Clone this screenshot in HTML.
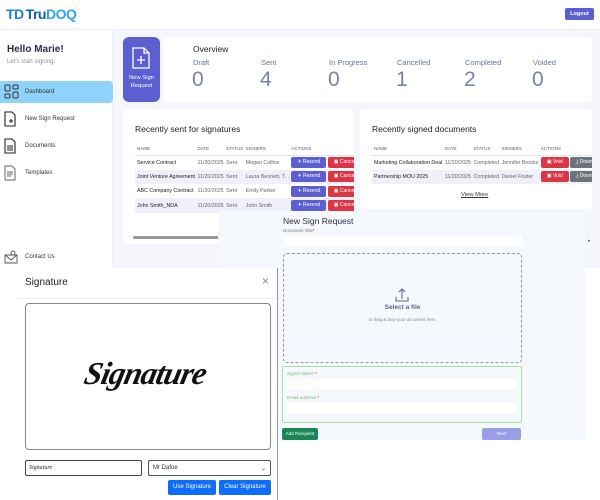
<!DOCTYPE html>
<html><head><style>
*{box-sizing:border-box;margin:0;padding:0}
body{width:600px;height:500px;position:relative;overflow:hidden;background:#fff;font-family:"Liberation Sans",sans-serif;color:#222}
.a{position:absolute}
.bg{left:113px;top:30px;width:487px;height:238px;background:#f4f6fc}
.hdr{left:0;top:0;width:600px;height:30px;border-bottom:1px solid #eceef5;background:#fff}
.sb{left:0;top:30px;width:113px;height:238px;border-right:1px solid #eceef5;background:#fff}
.card{background:#fff;border-radius:4px}
.lbl{font-size:7.5px;color:#6b7398}
.num{font-size:21px;color:#7a82a6;font-weight:300}
table{border-collapse:collapse;font-size:5.3px}
th{font-weight:normal;color:#555a7a;text-align:left;padding:4px 2.5px 4px 0;border-bottom:1px solid #e3e5ee;font-size:4.5px}
td{padding:0 2.5px 0 0;height:14.3px;color:#666;white-space:nowrap}
td:first-child,th:first-child{padding-left:2px}
td:first-child{color:#222}
tr.alt td{background:#f0f0fa}
.b{display:inline-block;color:#fff;border-radius:2px;height:11px;line-height:11px;font-size:5px;padding:0 6px}
.nav{position:absolute;left:25px;font-size:6px;color:#333}
</style></head><body>
<div class="a bg"></div>
<div class="a hdr"></div>
<div class="a" style="left:6px;top:6px;font-size:14px;font-weight:bold;color:#1e7ee8;letter-spacing:-0.5px">TD<span style="color:#0d5fb5;margin-left:2px">Tru</span><span style="color:#2aa5e8">DOQ</span></div>
<div class="a" style="left:565px;top:8px;width:29px;height:12px;background:#5b5fd0;border-radius:2px;color:#fff;font-size:5.5px;font-weight:bold;text-align:center;line-height:12px">Logout</div>
<div class="a sb"></div>
<div class="a" style="left:7px;top:44px;font-size:10px;font-weight:bold;color:#2c3148">Hello Marie!</div>
<div class="a" style="left:7px;top:59px;font-size:6px;color:#8a8fa8">Let's start signing.</div>
<div class="a" style="left:0;top:81px;width:113px;height:22px;background:#8fd3fb;border-radius:0 4px 4px 0"></div>
<svg class="a" style="left:4px;top:84px" width="15" height="15" viewBox="0 0 15 15" fill="none" stroke="#333" stroke-width="1"><rect x="1" y="1" width="5" height="6" rx="1"/><rect x="9" y="1" width="5" height="4" rx="1"/><rect x="1" y="10" width="5" height="4" rx="1"/><rect x="9" y="8" width="5" height="6" rx="1"/></svg>
<div class="nav" style="top:89px">Dashboard</div>
<svg class="a" style="left:4px;top:111px" width="12" height="16" viewBox="0 0 12 16" fill="none" stroke="#222" stroke-width="1.1"><path d="M1 1h7l3 3v11H1z M5 10h4 M7 8v4"/></svg>
<div class="nav" style="top:116px">New Sign Request</div>
<svg class="a" style="left:4px;top:138px" width="12" height="16" viewBox="0 0 12 16" fill="none" stroke="#222" stroke-width="1.1"><path d="M1 1h7l3 3v11H1z M3 8h6 M3 10h6 M3 12h6"/></svg>
<div class="nav" style="top:143px">Documents</div>
<svg class="a" style="left:4px;top:165px" width="12" height="16" viewBox="0 0 12 16" fill="none" stroke="#666" stroke-width="1"><path d="M1 1h7l3 3v11H1z M3 7h6 M3 9h6 M3 11h4"/></svg>
<div class="nav" style="top:170px">Templates</div>
<svg class="a" style="left:4px;top:250px" width="14" height="14" viewBox="0 0 14 14" fill="none" stroke="#555" stroke-width="0.9"><path d="M1 5h12v8H1z M1 5l6 5 6-5"/><circle cx="9" cy="3" r="2"/></svg>
<div class="nav" style="top:254px">Contact Us</div>

<div class="a" style="left:123px;top:37px;width:37px;height:65px;background:#5b5fd0;border-radius:6px"></div>
<svg class="a" style="left:132px;top:47px" width="18" height="22" viewBox="0 0 18 22" fill="none" stroke="#fff" stroke-width="1.3"><path d="M1 1h11l5 5v15H1z M12 1v5h5 M5 13h8 M9 9v8"/></svg>
<div class="a" style="left:123px;top:75px;width:37px;text-align:center;color:#fff;font-size:5.8px;line-height:7.5px">New Sign Request</div>
<div class="a card" style="left:163px;top:37px;width:429px;height:65px"></div>
<div class="a" style="left:193px;top:44px;font-size:8.5px;color:#222">Overview</div>
<div class="a lbl" style="left:193px;top:58px">Draft</div><div class="a num" style="left:192px;top:68px">0</div>
<div class="a lbl" style="left:261px;top:58px">Sent</div><div class="a num" style="left:260px;top:68px">4</div>
<div class="a lbl" style="left:329px;top:58px">In Progress</div><div class="a num" style="left:328px;top:68px">0</div>
<div class="a lbl" style="left:397px;top:58px">Cancelled</div><div class="a num" style="left:396px;top:68px">1</div>
<div class="a lbl" style="left:465px;top:58px">Completed</div><div class="a num" style="left:464px;top:68px">2</div>
<div class="a lbl" style="left:533px;top:58px">Voided</div><div class="a num" style="left:532px;top:68px">0</div>

<div class="a card" style="left:123px;top:109px;width:231px;height:135px;overflow:hidden">
<div style="position:absolute;left:12px;top:15px;font-size:8.5px">Recently sent for signatures</div>
<table style="position:absolute;left:12px;top:33px">
<tr><th>NAME</th><th>DATE</th><th>STATUS</th><th>SIGNERS</th><th>ACTIONS</th></tr>
<tr><td>Service Contract</td><td>11/20/2025</td><td>Sent</td><td>Megan Collins</td><td><span class="b" style="background:#5b5fd0">✈ Resend</span> <span class="b" style="background:#dc3545">▣ Cancel</span></td></tr>
<tr class="alt"><td>Joint Venture Agreement</td><td>11/20/2025</td><td>Sent</td><td>Laura Bennett, T...</td><td><span class="b" style="background:#5b5fd0">✈ Resend</span> <span class="b" style="background:#dc3545">▣ Cancel</span></td></tr>
<tr><td>ABC Company Contract</td><td>11/20/2025</td><td>Sent</td><td>Emily Parker</td><td><span class="b" style="background:#5b5fd0">✈ Resend</span> <span class="b" style="background:#dc3545">▣ Cancel</span></td></tr>
<tr class="alt"><td>John Smith_NDA</td><td>11/20/2025</td><td>Sent</td><td>John Smith</td><td><span class="b" style="background:#5b5fd0">✈ Resend</span> <span class="b" style="background:#dc3545">▣ Cancel</span></td></tr>
</table>
<div style="position:absolute;left:10px;top:127px;width:100px;height:3px;background:#999;border-radius:2px"></div>
</div>
<div class="a card" style="left:360px;top:109px;width:232px;height:100px;overflow:hidden">
<div style="position:absolute;left:12px;top:15px;font-size:8.5px">Recently signed documents</div>
<table style="position:absolute;left:12px;top:33px">
<tr><th>NAME</th><th>DATE</th><th>STATUS</th><th>SIGNERS</th><th>ACTIONS</th></tr>
<tr><td>Marketing Collaboration Deal</td><td>11/20/2025</td><td>Completed</td><td>Jennifer Brooks</td><td><span class="b" style="background:#dc3545">▣ Void</span> <span class="b" style="background:#6c757d">⤓ Download</span></td></tr>
<tr class="alt"><td>Partnership MOU 2025</td><td>11/20/2025</td><td>Completed</td><td>Daniel Foster</td><td><span class="b" style="background:#dc3545">▣ Void</span> <span class="b" style="background:#6c757d">⤓ Download</span></td></tr>
</table>
<div style="position:absolute;left:101px;top:83px;font-size:5.8px;text-decoration:underline;color:#333">View More</div>
</div>

<div class="a" style="left:218px;top:211px;width:367px;height:229px;background:#f5f8fd"></div>
<div class="a" style="left:283px;top:216px;font-size:8.5px;color:#2c3148">New Sign Request</div>
<div class="a" style="left:283px;top:228px;font-size:4.5px;color:#777">Document Title<span style="color:red">*</span></div>
<div class="a" style="left:283px;top:236px;width:239px;height:10px;background:#fff"></div>
<div class="a" style="left:283px;top:253px;width:239px;height:110px;border:1px dashed #999;border-radius:4px"></div>
<svg class="a" style="left:394px;top:287px" width="16" height="16" viewBox="0 0 16 16" fill="none" stroke="#5a6790" stroke-width="1.1"><path d="M8 12V2 M5 5l3-3 3 3 M2 10v4h12v-4"/></svg>
<div class="a" style="left:283px;top:304px;width:239px;text-align:center;font-size:6.5px;font-weight:bold;color:#5a6790">Select a file</div>
<div class="a" style="left:283px;top:317px;width:239px;text-align:center;font-size:4.3px;color:#888">or drag &amp; drop your document here.</div>
<div class="a" style="left:282px;top:366px;width:240px;height:57px;border:1px solid #a8e29a;border-radius:2px"></div>
<div class="a" style="left:287px;top:371px;font-size:4.6px;color:#7cb96e">Signer Name <span style="color:red">*</span></div>
<div class="a" style="left:287px;top:379px;width:230px;height:10px;background:#fff"></div>
<div class="a" style="left:287px;top:395px;font-size:4.6px;color:#7cb96e">Email address <span style="color:red">*</span></div>
<div class="a" style="left:287px;top:403px;width:230px;height:10px;background:#fff"></div>
<div class="a" style="left:282px;top:428px;width:36px;height:12px;background:#198754;border-radius:2px;color:#fff;font-size:4.6px;text-align:center;line-height:12px">Add Recipient</div>
<div class="a" style="left:482px;top:428px;width:39px;height:12px;background:#9a9ee6;border-radius:2px;color:#fff;font-size:4.6px;text-align:center;line-height:12px">Next</div>
<div class="a" style="left:588px;top:238px;font-size:5px;color:#666">▸</div>

<div class="a" style="left:18px;top:268px;width:260px;height:232px;background:#fff;border-right:1px solid #999"></div>
<div class="a" style="left:25px;top:277px;font-size:10px;color:#222">Signature</div>
<div class="a" style="left:262px;top:274px;font-size:12px;color:#888">×</div>
<div class="a" style="left:18px;top:298px;width:259px;height:1px;background:#eee"></div>
<div class="a" style="left:25px;top:303px;width:246px;height:147px;border:1px solid #888;border-radius:4px"></div>
<div class="a" style="left:85px;top:355px;font-family:'Liberation Serif',serif;font-style:italic;font-weight:bold;font-size:32px;color:#111;letter-spacing:-1px;transform:skewX(-12deg)">Signature</div>
<div class="a" style="left:25px;top:460px;width:117px;height:16px;border:1.5px solid #444;border-radius:2px;font-size:6px;font-style:italic;padding:4px 3px;font-family:'Liberation Serif',serif">Signature</div>
<div class="a" style="left:148px;top:460px;width:123px;height:16px;border:1px solid #555;border-radius:2px;font-size:6px;padding:4px 4px;color:#333">Mr Dafoe<span style="float:right">⌄</span></div>
<div class="a" style="left:168px;top:480px;width:48px;height:15px;background:#0d6efd;border-radius:2px;color:#fff;font-size:6px;text-align:center;line-height:15px">Use Signature</div>
<div class="a" style="left:219px;top:480px;width:52px;height:15px;background:#0d6efd;border-radius:2px;color:#fff;font-size:6px;text-align:center;line-height:15px">Clear Signature</div>
</body></html>
